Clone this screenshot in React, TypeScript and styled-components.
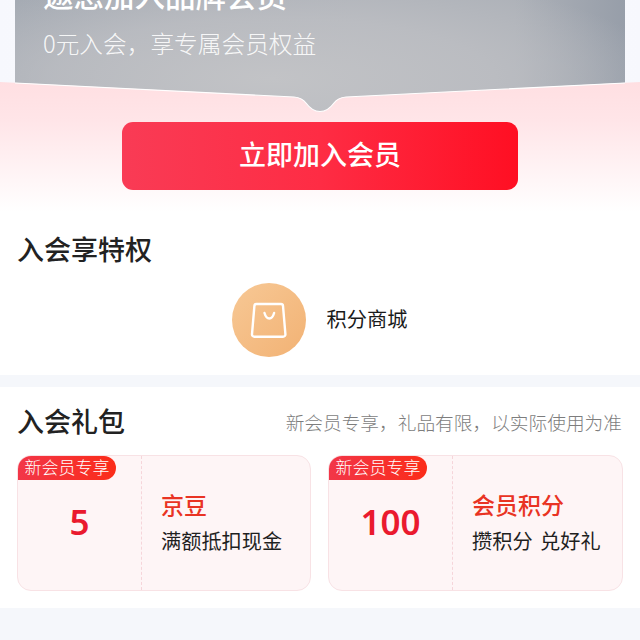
import React from 'react';
import styled, { createGlobalStyle } from 'styled-components';

const GlobalStyle = createGlobalStyle`
  html, body {
    margin: 0;
    padding: 0;
    background: #fff;
  }
  * {
    box-sizing: border-box;
  }
`;

const Page = styled.div`
  width: 640px;
  height: 640px;
  overflow: hidden;
  display: flex;
  flex-direction: column;
  background: #f5f7fb;
  font-family: 'Noto Sans CJK SC', 'Noto Sans', sans-serif;
  color: #1a1a1a;
`;

const Hero = styled.section`
  position: relative;
  height: 215px;
  padding: 0 15px;
  background: linear-gradient(90deg, #f7f8fd, #fdfdff 50%, #f7f8fd);
`;

const BrandCard = styled.div`
  height: 112px;
  padding: 0 28px;
  overflow: hidden;
  color: #fff;
  background:
    radial-gradient(ellipse 400px 110px at 42% 70%, #c2c3c6 0%, rgba(192, 193, 197, 0.7) 55%, rgba(170, 175, 182, 0) 100%),
    linear-gradient(90deg, #a3a9b2 0%, #adb1b8 55%, #adb1b8 82%, #979ea9 100%);
`;

const BrandTitle = styled.h1`
  margin: -28px 0 0;
  font-size: 30.5px;
  line-height: 44px;
  font-weight: 500;
  white-space: nowrap;
`;

const BrandNote = styled.p`
  margin: 11px 0 0;
  font-size: 23.7px;
  line-height: 32px;
  font-weight: 300;
  color: rgba(255, 255, 255, 0.9);
  white-space: nowrap;
`;

const Curtain = styled.svg`
  position: absolute;
  left: 0;
  top: 0;
`;

const JoinButton = styled.button`
  position: relative;
  display: block;
  width: 396px;
  height: 68px;
  margin: 10px auto 0;
  padding: 0 0 6px;
  border: none;
  border-radius: 11px;
  background: linear-gradient(90deg, #f93b55 0%, #fe2c44 50%, #ff0f23 100%);
  color: #fff;
  font-family: inherit;
  font-size: 27px;
  font-weight: 500;
`;

const Panel = styled.section<{ $height: number; $gap?: number }>`
  height: ${(p) => p.$height}px;
  margin-top: ${(p) => p.$gap ?? 0}px;
  padding: 0 17px;
  background: #fff;
`;

const SectionTitle = styled.h2`
  margin: 0;
  font-size: 27px;
  line-height: 40px;
  font-weight: 500;
  color: #222;
`;

const PerkHeader = styled.div`
  height: 68px;
  padding-top: 14px;
`;

const PerkRow = styled.div`
  display: flex;
  align-items: center;
  justify-content: center;
  gap: 21px;
  padding-right: 1px;
  font-size: 20.2px;
`;

const PerkName = styled.span`
  padding-bottom: 4px;
`;

const PerkBadge = styled.div`
  width: 74px;
  height: 74px;
  border-radius: 50%;
  background: linear-gradient(135deg, #f7c895, #f2b274);
  display: flex;
`;

const GiftHeader = styled.div`
  display: flex;
  align-items: center;
  justify-content: space-between;
  height: 68px;
  padding-right: 1px;
`;

const GiftNote = styled.span`
  font-size: 18.7px;
  font-weight: 300;
  color: #7d7d7d;
  white-space: nowrap;
`;

const GiftGrid = styled.div`
  display: grid;
  grid-template-columns: 294px 295px;
  gap: 17px;
`;

const GiftCard = styled.div`
  position: relative;
  height: 136px;
  display: flex;
  border: 1px solid #f8e2e5;
  border-radius: 14px;
  overflow: hidden;
  background: #fef5f6;
`;

const GiftTag = styled.span`
  position: absolute;
  left: 0;
  top: 0;
  width: 98px;
  height: 24px;
  line-height: 22px;
  text-align: center;
  border-radius: 0 12px 12px 0;
  background: linear-gradient(90deg, #f23648, #fb2c19);
  color: #fff;
  font-size: 17px;
  font-weight: 300;
  white-space: nowrap;
`;

const GiftAmount = styled.div`
  width: 124px;
  padding-bottom: 4px;
  display: flex;
  align-items: center;
  justify-content: center;
  border-right: 1px dashed #f6d5da;
  color: #ea1a2e;
  font-family: 'Noto Sans', sans-serif;
  font-size: 35px;
  font-weight: 600;
`;

const GiftBody = styled.div`
  flex: 1;
  padding: 31px 0 0 19px;
`;

const GiftName = styled.div`
  font-size: 23px;
  line-height: 34px;
  font-weight: 500;
  color: #e93323;
`;

const GiftDesc = styled.div`
  margin-top: 5px;
  font-size: 20.2px;
  line-height: 30px;
  font-weight: 400;
  word-spacing: 3px;
  color: #1f1f1f;
  white-space: nowrap;
`;

const gifts = [
  { amount: '5', name: '京豆', desc: '满额抵扣现金' },
  { amount: '100', name: '会员积分', desc: '攒积分 兑好礼' },
];

const BagIcon: React.FC = () => (
  <svg width="74" height="74" viewBox="0 0 74 74" fill="none" stroke="#fff" strokeWidth="2.4" strokeLinecap="round" strokeLinejoin="round">
    <path d="M24.5 21h24.5a2 2 0 0 1 2 1.8l2.4 28.4a2.4 2.4 0 0 1-2.4 2.6H22.4a2.4 2.4 0 0 1-2.4-2.6l2.4-28.4a2 2 0 0 1 2.1-1.8z" />
    <path d="M32.5 30c1 3.6 2.6 5.5 4.8 5.5s3.8-1.9 4.8-5.5" />
  </svg>
);

const App: React.FC = () => (
  <Page>
    <GlobalStyle />
    <Hero>
      <BrandCard>
        <BrandTitle>邀您加入品牌会员</BrandTitle>
        <BrandNote>0元入会，享专属会员权益</BrandNote>
      </BrandCard>
      <Curtain width="640" height="215" viewBox="0 0 640 215">
        <defs>
          <linearGradient id="curtain" x1="0" y1="82" x2="0" y2="212" gradientUnits="userSpaceOnUse">
            <stop offset="0" stopColor="#ffdfe2" />
            <stop offset="0.3" stopColor="#ffe5e8" />
            <stop offset="1" stopColor="#ffffff" />
          </linearGradient>
        </defs>
        <path
          d="M0 82L294 97C300 97.5 303 99 306 103C310 108.5 314 111.5 320 111.5C326 111.5 330 108.5 334 103C337 99 340 97.5 346 97L640 82V215H0Z"
          fill="url(#curtain)"
        />
        <path
          d="M15 83L294 97C300 97.5 303 99 306 103C310 108.5 314 111.5 320 111.5C326 111.5 330 108.5 334 103C337 99 340 97.5 346 97L625 83"
          fill="none"
          stroke="#fff"
          strokeWidth="1.2"
        />
      </Curtain>
      <JoinButton>立即加入会员</JoinButton>
    </Hero>
    <Panel $height={160}>
      <PerkHeader>
        <SectionTitle>入会享特权</SectionTitle>
      </PerkHeader>
      <PerkRow>
        <PerkBadge>
          <BagIcon />
        </PerkBadge>
        <PerkName>积分商城</PerkName>
      </PerkRow>
    </Panel>
    <Panel $height={221} $gap={12}>
      <GiftHeader>
        <SectionTitle>入会礼包</SectionTitle>
        <GiftNote>新会员专享，礼品有限，以实际使用为准</GiftNote>
      </GiftHeader>
      <GiftGrid>
        {gifts.map((gift) => (
          <GiftCard key={gift.name}>
            <GiftTag>新会员专享</GiftTag>
            <GiftAmount>{gift.amount}</GiftAmount>
            <GiftBody>
              <GiftName>{gift.name}</GiftName>
              <GiftDesc>{gift.desc}</GiftDesc>
            </GiftBody>
          </GiftCard>
        ))}
      </GiftGrid>
    </Panel>
  </Page>
);

export default App;
